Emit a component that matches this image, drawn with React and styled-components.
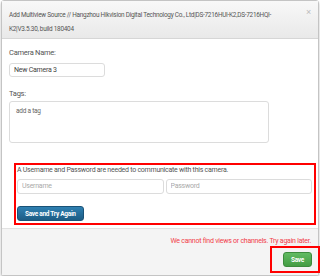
import React from 'react'
import styled, { createGlobalStyle } from 'styled-components'

const GlobalStyle = createGlobalStyle`
  html, body {
    margin: 0;
    padding: 0;
    background: #ffffff;
  }
  body {
    font-family: "Roboto", "Liberation Sans", sans-serif;
    letter-spacing: -0.25px;
    color: #444;
  }
`

const Modal = styled.div`
  width: 316px;
  height: 274px;
  margin-left: 1px;
  border: 1px solid #c4c4c4;
  border-radius: 3px;
  box-shadow: 0 2px 3px rgba(0, 0, 0, 0.25);
  display: flex;
  flex-direction: column;
  background: #fff;
`

const Header = styled.div`
  height: 37px;
  flex-shrink: 0;
  display: flex;
  align-items: flex-start;
  justify-content: space-between;
  padding: 0 7px;
  background: linear-gradient(#f8f8f8, #e9e9e9);
  border-bottom: 1px solid #d6d6d6;
  box-sizing: content-box;
`

const Title = styled.div`
  width: 266px;
  font-size: 6.4px;
  line-height: 14px;
  padding-top: 7px;
  color: #555;
`

const Close = styled.span`
  font-family: "Liberation Sans", sans-serif;
  font-size: 9px;
  color: #bbb;
  padding-top: 6px;
`

const Body = styled.div`
  flex: 1;
  min-height: 0;
  padding: 9px 7px 3px 7px;
  display: flex;
  flex-direction: column;
`

const Label = styled.div`
  font-size: 7.5px;
  line-height: 10px;
  color: #555;
  margin-bottom: ${({ gap }) => gap}px;
`

const TextInput = styled.input`
  box-sizing: border-box;
  width: ${({ w }) => w}px;
  height: ${({ h }) => h}px;
  border: 1px solid #dcdcdc;
  border-radius: 3px;
  padding: 0 4px;
  font-family: inherit;
  letter-spacing: -0.25px;
  font-size: 7px;
  color: #444;
  outline: none;
  margin: 0 0 ${({ mb }) => mb || 0}px 0;
  &::placeholder {
    color: #aaa;
  }
`

const TagsBox = styled.div`
  box-sizing: border-box;
  width: 260px;
  height: 45px;
  border: 1px solid #dcdcdc;
  border-radius: 3px;
  padding: 5px 6px;
  font-size: 6.5px;
  color: #666;
`

const Credentials = styled.div`
  margin: 20px -5px 0 5px;
  border: 2px solid #f00;
  padding: 0 2px 2px 1px;
  display: flex;
  flex-direction: column;
`

const Notice = styled.div`
  font-size: 7px;
  line-height: 10px;
  color: #555;
  margin-bottom: 4px;
`

const Row = styled.div`
  display: flex;
  gap: 2px;
  margin-bottom: 7px;
`

const Button = styled.button`
  border: 1px solid ${({ dark }) => dark};
  border-radius: 3px;
  background: linear-gradient(${({ top }) => top}, ${({ bottom }) => bottom});
  color: #fff;
  font-family: inherit;
  letter-spacing: -0.3px;
  font-weight: bold;
  font-size: 6.5px;
  height: 15px;
  margin: 0;
  padding: 0 ${({ px }) => px}px;
  cursor: pointer;
`

const Footer = styled.div`
  height: 46px;
  flex-shrink: 0;
  background: #f4f4f4;
  border-top: 1px solid #e2e2e2;
  display: flex;
  flex-direction: column;
  align-items: flex-end;
`

const ErrorText = styled.div`
  font-size: 7px;
  line-height: 10px;
  color: #f2404a;
  margin: 7px 7px 0 0;
`

const SaveHighlight = styled.div`
  border: 2px solid #f00;
  padding: 4px 6px 4px 11px;
  margin-right: -2px;
  display: flex;
`

export default function App() {
  return (
    <>
      <GlobalStyle />
      <Modal>
        <Header>
          <Title>
            Add Multiview Source // Hangzhou Hikvision Digital Technology Co., Ltd|DS-7216HUI-K2,DS-7216HQI-K2|V3.5.30, build 180404
          </Title>
          <Close>×</Close>
        </Header>
        <Body>
          <Label gap={5}>Camera Name:</Label>
          <TextInput w={96} h={16} defaultValue="New Camera 3" mb={12} />
          <Label gap={2}>Tags:</Label>
          <TagsBox>add a tag</TagsBox>
          <Credentials>
            <Notice>A Username and Password are needed to communicate with this camera.</Notice>
            <Row>
              <TextInput w={147} h={15} placeholder="Username" />
              <TextInput w={147} h={15} placeholder="Password" />
            </Row>
            <div>
              <Button top="#2f80b2" bottom="#1c5c84" dark="#1a5277" px={7}>Save and Try Again</Button>
            </div>
          </Credentials>
        </Body>
        <Footer>
          <ErrorText>We cannot find views or channels. Try again later.</ErrorText>
          <SaveHighlight>
            <Button top="#62bb62" bottom="#449d44" dark="#3d8b3d" px={7}>Save</Button>
          </SaveHighlight>
        </Footer>
      </Modal>
    </>
  )
}
